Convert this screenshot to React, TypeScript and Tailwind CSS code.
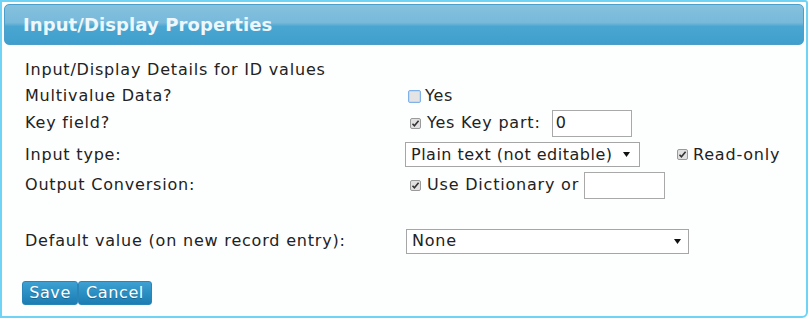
import React from "react";

const font = { fontFamily: '"DejaVu Sans", Verdana, sans-serif' };

function Check({ checked }: { checked?: boolean }) {
  if (!checked) {
    return (
      <span className="inline-block w-[13px] h-[13px] rounded-[2px] border border-[#7fb2e8] bg-[#e4e4e4] shadow-[inset_0_0_0_1px_#d6d6d6]" />
    );
  }
  return (
    <span className="inline-flex items-center justify-center w-[11px] h-[11px] rounded-[2px] border border-[#9a9a9a] bg-[#e1e1e1]">
      <svg width="9" height="9" viewBox="0 0 9 9">
        <path d="M1.5 4.8 L3.4 6.8 L7.6 1.8" stroke="#333" strokeWidth="1.6" fill="none" />
      </svg>
    </span>
  );
}

function Arrow() {
  return (
    <svg width="7" height="5" viewBox="0 0 7 5">
      <path d="M0 0 H7 L3.5 5 Z" fill="#111" />
    </svg>
  );
}

const btn =
  "h-[24px] rounded-[3px] border border-[#2a86b8] bg-[linear-gradient(to_bottom,#3ea0d2_0%,#2a8fc4_50%,#1c7db2_100%)] text-white text-[16px] leading-none tracking-[0.6px] [text-shadow:0_1px_0_rgba(0,0,0,0.25)] flex items-center justify-center";

export default function App() {
  return (
    <div
      className="w-[809px] h-[319px] bg-white text-[16px] text-[#222]"
      style={font}
    >
      <div className="w-[808px] h-[318px] border-2 border-[#6fd3f5] rounded-br-[6px] rounded-tr-[3px] bg-[#fdfefe] p-[2px]">
        <div className="h-[41px] rounded-[5px] border border-[#4c9fcb] bg-[linear-gradient(to_bottom,#84c1de_0%,#78b9da_45%,#4aa6d1_55%,#3f9fcc_100%)] flex items-center pl-[18px]">
          <span className="text-[18px] font-bold text-[#eef7fc] tracking-[0.1px]">
            Input/Display Properties
          </span>
        </div>

        <div className="pl-[21px] pt-[12px] tracking-[0.8px]">
          <div className="flex items-center h-[26px]">
            <span>Input/Display Details for ID values</span>
          </div>

          <div className="flex items-center h-[26px]">
            <span className="w-[381px] shrink-0">Multivalue Data?</span>
            <span className="flex items-center gap-[4px] ml-[2px]">
              <Check />
              <span>Yes</span>
            </span>
          </div>

          <div className="flex items-center h-[28px]">
            <span className="w-[381px] shrink-0">Key field?</span>
            <span className="flex items-center ml-[4px]">
              <Check checked />
              <span className="ml-[6px]">Yes Key part:</span>
              <span className="ml-[11px] w-[80px] h-[27px] border border-[#a9a9a9] bg-white flex items-center pl-[3px]">
                0
              </span>
            </span>
          </div>

          <div className="flex items-center h-[33px] pt-[2px]">
            <span className="w-[380px] shrink-0">Input type:</span>
            <span className="w-[235px] h-[25px] shrink-0 border border-[#a6a6a6] bg-white flex items-center justify-between pl-[5px] pr-[9px]">
              <span className="tracking-[0.5px]">Plain text (not editable)</span>
              <Arrow />
            </span>
            <span className="flex items-center ml-[37px]">
              <Check checked />
              <span className="ml-[5px]">Read-only</span>
            </span>
          </div>

          <div className="flex items-center h-[28px] mt-[1px]">
            <span className="w-[381px] shrink-0">Output Conversion:</span>
            <span className="flex items-center ml-[4px]">
              <Check checked />
              <span className="ml-[6px]">Use Dictionary or</span>
              <span className="ml-[5px] w-[81px] h-[27px] border border-[#a9a9a9] bg-white" />
            </span>
          </div>

          <div className="flex items-center h-[26px] mt-[29px]">
            <span className="w-[381px] shrink-0">Default value (on new record entry):</span>
            <span className="w-[283px] h-[25px] border border-[#a6a6a6] bg-white flex items-center justify-between pl-[5px] pr-[7px]">
              <span>None</span>
              <Arrow />
            </span>
          </div>

          <div className="flex items-center mt-[27px] -ml-[3px]">
            <button className={btn + " w-[56px]"}>Save</button>
            <button className={btn + " w-[74px]"}>Cancel</button>
          </div>
        </div>
      </div>
    </div>
  );
}
